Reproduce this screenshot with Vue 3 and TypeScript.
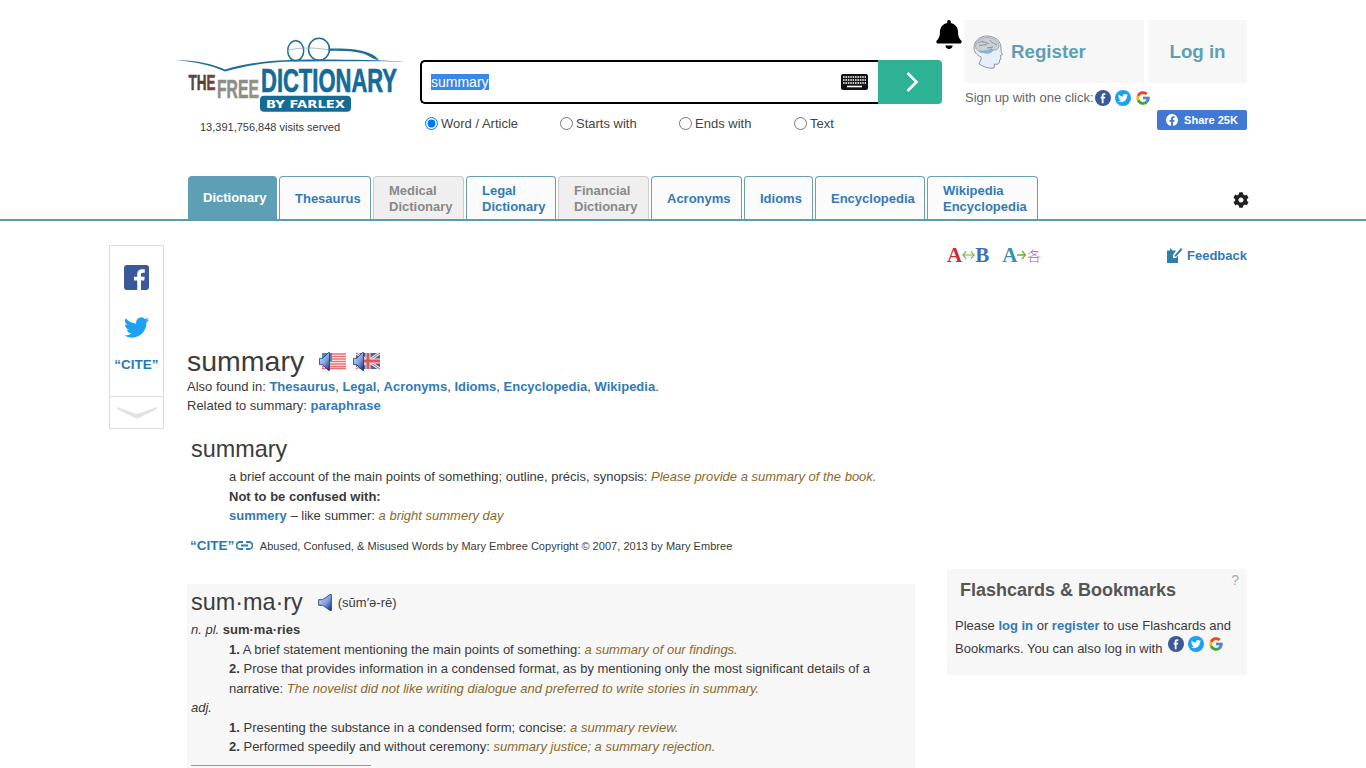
<template>
  <div class="page">
    <!-- shared icons -->
    <svg class="defs" width="0" height="0">
      <defs>
        <linearGradient id="speaker-fill" x1="0" y1="0" x2="1" y2="1">
          <stop offset="0" stop-color="#d5e4f8" />
          <stop offset=".55" stop-color="#7f9fdc" />
          <stop offset="1" stop-color="#12297e" />
        </linearGradient>
        <linearGradient id="the-fill" x1="0" y1="0" x2="1" y2="0">
          <stop offset="0" stop-color="#56504c" />
          <stop offset=".55" stop-color="#5a3a2e" />
          <stop offset="1" stop-color="#7d4b3a" />
        </linearGradient>
        <linearGradient id="free-fill" x1="0" y1="0" x2="1" y2="0">
          <stop offset="0" stop-color="#8e8e88" />
          <stop offset=".7" stop-color="#8e8e88" />
          <stop offset="1" stop-color="#a5976f" />
        </linearGradient>
        <symbol id="i-fb" viewBox="0 0 24 24">
          <circle cx="12" cy="12" r="12" fill="#3b5998" />
          <path d="M15.5 7.5h-1.6c-.8 0-1.1.4-1.1 1.1v1.6h2.600l-.4 2.600h-2.200V20h-2.700v-7.200H8.500v-2.600h1.600V8.300c0-2.200 1.300-3.400 3.300-3.400h2.100z" fill="#fff" />
        </symbol>
        <symbol id="i-tw" viewBox="0 0 24 24">
          <circle cx="12" cy="12" r="12" fill="#1da1f2" />
          <path transform="translate(4.5 4.6) scale(.625)" d="M23.953 4.57a10 10 0 01-2.825.775 4.958 4.958 0 002.163-2.723c-.951.555-2.005.959-3.127 1.184a4.92 4.92 0 00-8.384 4.482C7.69 8.095 4.067 6.13 1.64 3.162a4.822 4.822 0 00-.666 2.475c0 1.71.87 3.213 2.188 4.096a4.904 4.904 0 01-2.228-.616v.06a4.923 4.923 0 003.946 4.827 4.996 4.996 0 01-2.212.085 4.936 4.936 0 004.604 3.417 9.867 9.867 0 01-6.102 2.105c-.39 0-.779-.023-1.17-.067a13.995 13.995 0 007.557 2.209c9.053 0 13.998-7.496 13.998-13.985 0-.21 0-.42-.015-.63A9.935 9.935 0 0024 4.59z" fill="#fff" />
        </symbol>
        <symbol id="i-g" viewBox="0 0 48 48">
          <path d="M43.6 20.5H42V20H24v8h11.3C33.7 32.7 29.2 36 24 36c-6.6 0-12-5.4-12-12s5.4-12 12-12c3.1 0 5.8 1.2 8 3l5.7-5.7C34 6.1 29.3 4 24 4 13 4 4 13 4 24s9 20 20 20 20-9 20-20c0-1.3-.1-2.4-.4-3.5z" fill="#fbbc05" />
          <path d="M6.3 14.7l6.6 4.8C14.7 15.1 19 12 24 12c3.1 0 5.8 1.2 8 3l5.7-5.7C34 6.1 29.3 4 24 4 16.3 4 9.7 8.3 6.3 14.7z" fill="#ea4335" />
          <path d="M24 44c5.2 0 9.9-2 13.4-5.2l-6.2-5.2C29.2 35.1 26.7 36 24 36c-5.2 0-9.6-3.3-11.3-8l-6.5 5C9.5 39.6 16.2 44 24 44z" fill="#34a853" />
          <path d="M43.6 20.5H42V20H24v8h11.3c-.8 2.2-2.2 4.2-4.1 5.6l6.2 5.2C37 39.2 44 34 44 24c0-1.3-.1-2.4-.4-3.5z" fill="#4285f4" />
        </symbol>
        <symbol id="i-speaker" viewBox="0 0 11 18" preserveAspectRatio="none">
          <path d="M.5 6h3.200L9.500.5h1v17h-1L3.700 12H.5z" fill="url(#speaker-fill)" stroke="#14297c" stroke-width=".7" />
        </symbol>
      </defs>
    </svg>

    <header class="top">
      <div class="brand">
        <svg class="logo" width="232" height="78" viewBox="0 0 232 78">
          <path d="M0 24C20 24 38 28 50 33.500C72 27 95 24.500 120 23.800C160 23.200 200 24 230 25.700C200 25 160 25 120 25.500C95 26 72 29 50 35.500C38 30 20 25.500 0 24Z" fill="#1d6f9a" />
          <ellipse cx="120.700" cy="14.700" rx="8" ry="10" fill="none" stroke="#1d6f9a" stroke-width="1.500" />
          <ellipse cx="144" cy="13.300" rx="10.500" ry="11" fill="none" stroke="#1d6f9a" stroke-width="1.500" />
          <path d="M112 14.500C125 11 140 11.500 155 14" fill="none" stroke="#7ea6bd" stroke-width=".7" />
          <path d="M153 12.500C170 12 186 13 194 17C199 19 202 21.500 204 24C198 23.500 195 20 188 17.500C178 15 165 14.500 154 15Z" fill="#1d6f9a" />
          <text class="logo-the" x="13.500" y="54" textLength="27" lengthAdjust="spacingAndGlyphs" fill="url(#the-fill)">THE</text>
          <text class="logo-free" x="42" y="62.300" textLength="42" lengthAdjust="spacingAndGlyphs" fill="url(#free-fill)">FREE</text>
          <text class="logo-dict" x="86" y="55.700" textLength="136" lengthAdjust="spacingAndGlyphs">DICTIONARY</text>
          <rect x="85" y="59.700" width="91" height="16" rx="4" fill="#156b96" />
          <text class="logo-by" x="91" y="71.800" textLength="79" lengthAdjust="spacingAndGlyphs">BY FARLEX</text>
        </svg>
        <p class="visits">13,391,756,848 visits served</p>
      </div>

      <form class="search" @submit.prevent>
        <div class="search-row">
          <div class="search-field">
            <input ref="searchInput" class="search-input" type="text" value="summary" />
            <svg class="keyboard" width="27" height="16" viewBox="0 0 27 16">
              <rect width="27" height="16" rx="2" fill="#111" />
              <path d="M2 3h23M2 6h23M2 9h23" stroke="#fff" stroke-width="1.400" stroke-dasharray="1.600 .8" />
              <path d="M6 12.500h15" stroke="#fff" stroke-width="1.600" />
            </svg>
          </div>
          <button class="search-btn" type="submit" aria-label="Search">
            <svg width="14" height="22" viewBox="0 0 14 22">
              <path d="M2.500 2l9 9-9 9" fill="none" stroke="#fff" stroke-width="2.600" />
            </svg>
          </button>
        </div>
        <div class="modes">
          <label v-for="m in modes" :key="m.label" class="mode" :style="{ width: m.width + 'px' }">
            <input type="radio" name="mode" :checked="m.label === 'Word / Article'" />{{ m.label }}
          </label>
        </div>
      </form>

      <svg class="bell" width="26" height="29" viewBox="0 0 448 512">
        <path d="M224 512c35.32 0 63.97-28.65 63.97-64H160.03c0 35.35 28.65 64 63.97 64zm215.39-149.71c-19.32-20.76-55.47-51.99-55.47-154.29 0-77.7-54.48-139.9-127.94-155.16V32c0-17.67-14.32-32-31.98-32s-31.98 14.33-31.98 32v20.84C118.56 68.1 64.08 130.3 64.08 208c0 102.3-36.15 133.53-55.47 154.29-6 6.45-8.66 14.16-8.61 21.71.11 16.4 12.98 32 32.1 32h383.8c19.12 0 32-15.6 32.1-32 .05-7.55-2.61-15.27-8.61-21.71z" />
      </svg>

      <div class="account">
        <div class="account-btns">
          <a class="acct-btn register">
            <svg width="30" height="34" viewBox="0 0 30 34">
              <path d="M1 13C1 6 7 1 14 1c8 0 14 5 14 12 0 3 0 4 1.500 6.500l-2 1 .5 3.500-1.500 1c.5 3-1 5-5 4l-.5 4c-5 1-11-1.500-15-4 1-3 3-5 2-7C4 20 1 17 1 13z" fill="#e6eefa" stroke="#8d939b" />
              <path d="M2.500 12C2.500 6 8 2.500 14 2.500c6 0 12 3.500 12 9-1 3-3 4-5.500 3.500-3 4-7 3.500-10 2.500-3 0-7-1.500-8-5.500z" fill="#cdd0d3" stroke="#8d939b" stroke-width=".7" />
              <path d="M6 11c3-2 5 0 8-2M9 6c2 2 5 1 7 3M17 5c1 3 4 3 7 5M5 8c2-1 3-2 5-1M14 13c2 0 4-1 6-1" fill="none" stroke="#7c8085" stroke-width=".8" />
              <path d="M6 15c4 1.500 9 .5 12-2l2.500 2c-3 3-6 3.500-10 3-2 0-3.500-1-4.500-3z" fill="#7fb1d8" />
            </svg>
            Register
          </a>
          <a class="acct-btn login">Log in</a>
        </div>
        <div class="signup">
          Sign up with one click:
          <svg class="signup-first" width="16" height="16"><use href="#i-fb" /></svg>
          <svg width="16" height="16"><use href="#i-tw" /></svg>
          <svg width="16" height="16"><use href="#i-g" /></svg>
        </div>
        <a class="share">
          <svg width="12" height="12" viewBox="0 0 24 24">
            <path d="M24 12a12 12 0 10-13.900 11.900v-8.400H7.100V12h3V9.400c0-3 1.800-4.700 4.500-4.700 1.300 0 2.700.2 2.700.2v3h-1.500c-1.500 0-2 .9-2 1.900V12h3.300l-.5 3.500h-2.800v8.400A12 12 0 0024 12z" fill="#fff" />
          </svg>
          Share 25K
        </a>
      </div>
    </header>

    <nav class="tabs">
      <a v-for="t in tabs" :key="t.label" class="tab" :class="t.kind" :style="{ width: t.width + 'px' }">
        <span>{{ t.label }}</span>
      </a>
      <svg class="gear" width="16" height="16" viewBox="0 0 512 512">
        <path d="M487.4 315.700l-42.600-24.600c4.300-23.200 4.300-47 0-70.200l42.600-24.600c4.900-2.800 7.100-8.600 5.500-14-11.100-35.600-30-67.800-54.700-94.600-3.800-4.100-10-5.100-14.800-2.300L380.800 110c-17.900-15.400-38.500-27.300-60.800-35.100V25.800c0-5.600-3.900-10.500-9.400-11.700-36.700-8.200-74.300-7.800-109.200 0-5.500 1.200-9.400 6.100-9.400 11.700V75c-22.200 7.900-42.800 19.800-60.800 35.100L88.700 85.500c-4.900-2.800-11-1.900-14.800 2.300-24.700 26.700-43.600 58.900-54.700 94.600-1.700 5.400.6 11.200 5.500 14L67.300 221c-4.300 23.200-4.300 47 0 70.200l-42.600 24.600c-4.900 2.800-7.100 8.600-5.500 14 11.100 35.600 30 67.800 54.700 94.600 3.800 4.100 10 5.100 14.800 2.300l42.600-24.600c17.900 15.400 38.500 27.300 60.800 35.100v49.200c0 5.600 3.900 10.500 9.400 11.700 36.700 8.200 74.300 7.800 109.200 0 5.500-1.200 9.400-6.100 9.400-11.700v-49.200c22.200-7.900 42.800-19.800 60.800-35.100l42.600 24.600c4.900 2.800 11 1.900 14.800-2.300 24.700-26.700 43.600-58.900 54.700-94.600 1.500-5.500-.7-11.300-5.600-14.100zM256 336c-44.100 0-80-35.900-80-80s35.900-80 80-80 80 35.900 80 80-35.900 80-80 80z" fill="#222" />
      </svg>
    </nav>

    <main class="main">
      <aside class="sharebar">
        <div class="sharebar-top">
          <svg class="bar-fb" width="25" height="25" viewBox="0 0 25 25">
            <rect width="25" height="25" rx="3" fill="#3b5998" />
            <path d="M17 25v-9.500h3.200l.5-3.700H17V9.500c0-1.100.3-1.800 1.800-1.800h2V4.400c-.4 0-1.500-.1-2.800-.1-2.900 0-4.800 1.700-4.800 4.900v2.600H10v3.700h3.200V25z" fill="#fff" />
          </svg>
          <svg class="bar-tw" width="25" height="21" viewBox="0 0 24 20">
            <path transform="translate(0 -2)" d="M23.953 4.570a10 10 0 01-2.825.775 4.958 4.958 0 002.163-2.723c-.951.555-2.005.959-3.127 1.184a4.920 4.920 0 00-8.384 4.482C7.690 8.095 4.067 6.130 1.640 3.162a4.822 4.822 0 00-.666 2.475c0 1.710.870 3.213 2.188 4.096a4.904 4.904 0 01-2.228-.616v.06a4.923 4.923 0 003.946 4.827 4.996 4.996 0 01-2.212.085 4.936 4.936 0 004.604 3.417 9.867 9.867 0 01-6.102 2.105c-.39 0-.779-.023-1.170-.067a13.995 13.995 0 007.557 2.209c9.053 0 13.998-7.496 13.998-13.985 0-.21 0-.42-.015-.63A9.935 9.935 0 0024 4.590z" fill="#1da1f2" />
          </svg>
          <span class="cite bar-cite">“CITE”</span>
        </div>
        <div class="sharebar-more">
          <svg width="40" height="14" viewBox="0 0 40 14">
            <path d="M0 1l20 7 20-7v2L20 13 0 3z" fill="#e3e3e3" />
          </svg>
        </div>
      </aside>

      <section class="content">
        <h1 class="headword">
          summary
          <span class="flag">
            <svg width="28" height="19" viewBox="0 0 28 19">
              <rect x="4" y="1" width="24" height="16" fill="#fff" />
              <path d="M4 2h24M4 4.500h24M4 7h24M4 9.500h24M4 12h24M4 14.500h24M4 16.500h24" stroke="#e86f6c" stroke-width="1.300" />
              <rect x="4" y="1" width="10" height="8.500" fill="#4f86b8" />
              <use href="#i-speaker" x="1" y="0" width="11" height="19" />
            </svg>
          </span>
          <span class="flag">
            <svg width="28" height="19" viewBox="0 0 28 19">
              <rect x="4" y="1" width="24" height="16" fill="#46619c" />
              <path d="M4 1l24 16M28 1L4 17" stroke="#f3e6e6" stroke-width="3" />
              <path d="M4 1l24 16M28 1L4 17" stroke="#d65a5a" stroke-width="1" />
              <path d="M16 1v16M4 9h24" stroke="#f3e6e6" stroke-width="5" />
              <path d="M16 1v16M4 9h24" stroke="#d65a5a" stroke-width="3" />
              <use href="#i-speaker" x="1" y="0" width="11" height="19" />
            </svg>
          </span>
        </h1>
        <p class="found">
          Also found in:
          <template v-for="(f, i) in foundIn" :key="f"><a class="link">{{ f }}</a>{{ i < foundIn.length - 1 ? ', ' : '.' }}</template>
        </p>
        <p class="found">Related to summary: <a class="link">paraphrase</a></p>

        <article class="usage">
          <h2 class="entry-word">summary</h2>
          <div class="def">
            a brief account of the main points of something; outline, précis, synopsis:
            <i class="ex">Please provide a summary of the book.</i>
          </div>
          <div class="def"><b>Not to be confused with:</b></div>
          <div class="def"><a class="link">summery</a> – like summer: <i class="ex">a bright summery day</i></div>
          <div class="source">
            <span class="cite">“CITE”</span>
            <svg width="17" height="9" viewBox="0 0 17 9">
              <path d="M7 1H4a3.500 3.500 0 000 7h3M10 1h3a3.500 3.500 0 010 7h-3M5 4.500h7" fill="none" stroke="#2f7fb8" stroke-width="1.800" />
            </svg>
            <span class="source-text">Abused, Confused, &amp; Misused Words by Mary Embree Copyright © 2007, 2013 by Mary Embree</span>
          </div>
        </article>

        <article class="entry">
          <div class="entry-head">
            <span class="entry-syl">sum·ma·ry</span>
            <svg class="entry-sound" width="14" height="17"><use href="#i-speaker" width="14" height="17" /></svg>
            <span class="pron">(sŭm′ə-rē)</span>
          </div>
          <div class="line"><i>n. pl.</i> <b>sum·ma·ries</b></div>
          <div class="def"><b>1.</b> A brief statement mentioning the main points of something: <i class="ex">a summary of our findings.</i></div>
          <div class="def">
            <b>2.</b> Prose that provides information in a condensed format, as by mentioning only the most significant details of a narrative:
            <i class="ex">The novelist did not like writing dialogue and preferred to write stories in summary.</i>
          </div>
          <div class="line"><i>adj.</i></div>
          <div class="def"><b>1.</b> Presenting the substance in a condensed form; concise: <i class="ex">a summary review.</i></div>
          <div class="def"><b>2.</b> Performed speedily and without ceremony: <i class="ex">summary justice; a summary rejection.</i></div>
          <hr class="rule" />
        </article>
      </section>

      <aside class="side">
        <div class="tools">
          <span class="tr tr-ab">
            <b class="a-red">A</b>
            <svg class="tr-arrow" width="13" height="10" viewBox="0 0 14 10">
              <path d="M4.500 1L1 5l3.500 4M9.500 1L13 5 9.500 9M1 5h12" fill="none" stroke="#6cb33f" stroke-width="1.200" />
            </svg>
            <b class="b-blue">B</b>
          </span>
          <span class="tr tr-lang">
            <b class="a-teal">A</b>
            <svg class="tr-arrow" width="9" height="10" viewBox="0 0 9 10">
              <path d="M5 1l3.500 4L5 9M0 5h8" fill="none" stroke="#6cb33f" stroke-width="1.300" />
            </svg>
            <span class="kanji">各</span>
          </span>
          <a class="feedback">
            <svg width="16" height="16" viewBox="0 0 16 16">
              <path d="M0 3.500h3V1l2.500 2.500H9L6 8v3h3l2-2.500V16H0z" fill="#2e7fa8" />
              <path d="M7.500 8.500L14 1l1.500 1.300L9.200 9.500H7.500z" fill="#2e7fa8" />
            </svg>
            Feedback
          </a>
        </div>
        <div class="flash">
          <span class="flash-help">?</span>
          <h3 class="flash-title">Flashcards &amp; Bookmarks</h3>
          <p class="flash-text">
            Please <a class="link">log in</a> or <a class="link">register</a> to use Flashcards and Bookmarks. You can also log in with
            <svg class="flash-fb" width="16" height="16"><use href="#i-fb" /></svg>
            <svg class="flash-tw" width="16" height="16"><use href="#i-tw" /></svg>
            <svg class="flash-g" width="16" height="16"><use href="#i-g" /></svg>
          </p>
        </div>
      </aside>
    </main>
  </div>
</template>

<script setup lang="ts">
import { onMounted, ref } from "vue"

interface Tab {
  label: string
  width: number
  kind: string
}

const searchInput = ref<HTMLInputElement | null>(null)

const modes = [
  { label: "Word / Article", width: 135 },
  { label: "Starts with", width: 119 },
  { label: "Ends with", width: 115 },
  { label: "Text", width: 60 },
]

const tabs: Tab[] = [
  { label: "Dictionary", width: 89, kind: "active" },
  { label: "Thesaurus", width: 92, kind: "" },
  { label: "Medical Dictionary", width: 91, kind: "muted" },
  { label: "Legal Dictionary", width: 90, kind: "" },
  { label: "Financial Dictionary", width: 91, kind: "muted" },
  { label: "Acronyms", width: 91, kind: "" },
  { label: "Idioms", width: 69, kind: "" },
  { label: "Encyclopedia", width: 110, kind: "" },
  { label: "Wikipedia Encyclopedia", width: 111, kind: "" },
]

const foundIn = ["Thesaurus", "Legal", "Acronyms", "Idioms", "Encyclopedia", "Wikipedia"]

onMounted(() => {
  searchInput.value?.focus()
  searchInput.value?.select()
})
</script>

<style>
html,
body {
  margin: 0;
  background: #fff;
}
</style>

<style scoped>
.page {
  height: 768px;
  overflow: hidden;
  font-family: "Liberation Sans", Arial, sans-serif;
  font-size: 13px;
  color: #3a3a3a;
  box-sizing: border-box;
}

.defs {
  position: absolute;
}

a {
  cursor: pointer;
}

p {
  margin: 0;
}

.link {
  color: #337ab7;
  font-weight: bold;
}

.ex {
  color: #8a6a2a;
}

.cite {
  color: #1f7ab8;
  font-weight: bold;
  font-size: 13.5px;
}

/* top */
.top {
  display: flex;
  height: 176px;
  padding-left: 175px;
}

.brand {
  width: 245px;
  padding-top: 36px;
  box-sizing: border-box;
  flex: none;
}

.logo {
  display: block;
}

.logo text {
  font-family: "Liberation Sans", Arial, sans-serif;
  font-weight: bold;
}

.logo-the {
  font-size: 22px;
  stroke: #5a3a2e;
  stroke-width: 0.5px;
}

.logo-free {
  font-size: 25.5px;
  stroke: #8e8e88;
  stroke-width: 0.6px;
}

.logo-dict {
  font-size: 33px;
  fill: #156b96;
  stroke: #156b96;
  stroke-width: 0.7px;
}

.logo .logo-by {
  font-family: "DejaVu Sans", sans-serif;
  font-size: 10.5px;
  fill: #fff;
}

.visits {
  font-size: 11px;
  margin: 7px 0 0 25px;
}

.search {
  width: 522px;
  padding-top: 60px;
  box-sizing: border-box;
  flex: none;
}

.search-row {
  display: flex;
  height: 44px;
}

.search-field {
  flex: 1;
  position: relative;
  display: flex;
}

.search-input {
  flex: 1;
  min-width: 0;
  border: 2px solid #000;
  border-right: 0;
  border-radius: 5px 0 0 5px;
  outline: 0;
  padding: 0 50px 0 9px;
  font: 14px "Liberation Sans", Arial, sans-serif;
  color: #000;
}

.search-input::selection {
  background: #3a87e6;
  color: #fff;
}

.keyboard {
  position: absolute;
  right: 10px;
  top: 14px;
}

.search-btn {
  width: 64px;
  border: 0;
  padding: 0 0 0 3px;
  background: #2db295;
  border-radius: 0 4px 4px 0;
  display: flex;
  align-items: center;
  justify-content: center;
}

.modes {
  display: flex;
  padding: 12px 0 0 5px;
}

.mode {
  display: flex;
  align-items: center;
  font-size: 13px;
  color: #444;
  flex: none;
}

.mode input {
  margin: 0 3px 0 0;
  width: 13px;
  height: 13px;
}

.bell {
  margin: 20px 0 0 -6px;
  flex: none;
}

.account {
  width: 283px;
  margin: 20px 0 0 2px;
  flex: none;
}

.account-btns {
  display: flex;
  gap: 4px;
}

.acct-btn {
  height: 63px;
  background: #f7f7f7;
  color: #5f9fb5;
  font-size: 18.72px;
  font-weight: bold;
  display: flex;
  align-items: center;
}

.register {
  width: 180px;
  gap: 8px;
  padding-left: 9px;
  box-sizing: border-box;
}

.login {
  width: 99px;
  justify-content: center;
}

.signup {
  display: flex;
  align-items: center;
  gap: 4px;
  margin-top: 6px;
  padding-left: 1px;
  height: 17px;
  color: #666;
  font-size: 13px;
  white-space: nowrap;
}

.signup-first {
  margin-left: -3px;
}

.share {
  display: flex;
  align-items: center;
  justify-content: center;
  gap: 6px;
  width: 90px;
  height: 20px;
  margin: 4px 0 0 193px;
  background: #4078d4;
  border-radius: 2px;
  color: #fff;
  font-size: 11px;
  font-weight: bold;
}

/* tabs */
.tabs {
  display: flex;
  align-items: flex-end;
  gap: 2px;
  height: 45px;
  padding-left: 188px;
  border-bottom: 2px solid #5f9bb0;
  box-sizing: border-box;
  position: relative;
}

.tab {
  height: 43px;
  box-sizing: border-box;
  flex: none;
  display: flex;
  align-items: center;
  padding: 2px 0 0 15px;
  border: 1px solid #6a9fb3;
  border-bottom: 0;
  border-radius: 4px 4px 0 0;
  background: #fbfbfb;
  color: #337ab7;
  font-size: 13px;
  line-height: 16px;
  font-weight: bold;
}

.tab.active {
  background: #5f9fb5;
  color: #fff;
  border-color: #5f9fb5;
  padding: 0 0 0 14px;
}

.tab.muted {
  background: #efefef;
  color: #888;
  border-color: #ccc;
}

.gear {
  position: absolute;
  left: 1233px;
  top: 16px;
}

/* main */
.main {
  display: flex;
}

.sharebar {
  width: 55px;
  height: 184px;
  margin: 24px 0 0 109px;
  border: 1px solid #ddd;
  box-sizing: border-box;
  flex: none;
  display: flex;
  flex-direction: column;
}

.sharebar-top {
  height: 150px;
  display: flex;
  flex-direction: column;
  align-items: center;
  padding-top: 19px;
  box-sizing: border-box;
}

.bar-tw {
  margin-top: 27px;
}

.bar-cite {
  margin-top: 19px;
  line-height: 16px;
}

.sharebar-more {
  flex: 1;
  border-top: 1px solid #ddd;
  display: flex;
  align-items: center;
  justify-content: center;
}

.content {
  width: 728px;
  margin-left: 23px;
  padding-top: 124px;
  flex: none;
}

.headword {
  margin: 0;
  font-size: 28.5px;
  font-weight: normal;
  line-height: 32px;
  color: #3c3c3c;
  display: flex;
  align-items: center;
}

.flag {
  margin-left: 6px;
  display: flex;
}

.flag:first-of-type {
  margin-left: 14px;
}

.found {
  line-height: 19px;
}

.usage {
  padding: 0 4px;
  margin-top: 17px;
}

.entry-word {
  margin: 0;
  font-size: 23.4px;
  font-weight: normal;
  line-height: 35px;
  color: #3c3c3c;
}

.def {
  margin-left: 38px;
  line-height: 19.5px;
}

.source {
  display: flex;
  align-items: center;
  height: 16px;
  margin: 12px 0 0 -1px;
}

.source svg {
  margin-left: 2px;
}

.source-text {
  font-size: 11px;
  margin-left: 6.5px;
  letter-spacing: 0.035px;
}

.entry {
  background: #f7f7f7;
  padding: 3px 4px 2px;
  margin-top: 30.5px;
}

.entry-head {
  display: flex;
  align-items: center;
  height: 30px;
  margin-bottom: 3px;
}

.entry-syl {
  font-size: 23.4px;
  color: #3c3c3c;
}

.entry-sound {
  margin-left: 15px;
}

.pron {
  margin-left: 6px;
}

.line {
  line-height: 19.5px;
}

.rule {
  width: 180px;
  margin: 8px 0 0;
  border: 0;
  border-top: 1px solid #999;
}

.side {
  width: 300px;
  margin-left: 32px;
  flex: none;
}

.tools {
  display: flex;
  align-items: center;
  height: 20px;
  margin-top: 24px;
}

.tr {
  display: flex;
  align-items: center;
  font-family: "Liberation Serif", serif;
  font-size: 21px;
  line-height: 20px;
}

.tr-lang {
  margin-left: 13px;
}

.tr-arrow {
  flex: none;
}

.a-red {
  color: #c8303a;
}

.b-blue {
  color: #3d6fb5;
}

.a-teal {
  color: #3592b0;
}

.kanji {
  color: #a5609e;
  font-size: 14px;
  margin-left: 1px;
  font-family: "Noto Sans CJK JP", sans-serif;
  font-weight: 300;
}

.feedback {
  margin-left: auto;
  display: flex;
  align-items: center;
  gap: 4px;
  color: #337ab7;
  font-weight: bold;
  font-size: 13px;
}

.flash {
  background: #f7f7f7;
  height: 106px;
  margin-top: 304px;
  padding: 11px 8px 0;
  box-sizing: border-box;
  position: relative;
}

.flash-help {
  position: absolute;
  top: 3px;
  right: 8px;
  color: #aaa;
  font-size: 14px;
}

.flash-title {
  margin: 0 0 0 5px;
  font-size: 18px;
  line-height: 20px;
  color: #555;
}

.flash-text {
  margin-top: 13.5px;
  line-height: 23px;
}

.flash-text svg {
  vertical-align: 0;
  transform: translateY(-1px);
}

.flash-fb {
  margin-left: 2px;
}

.flash-tw {
  margin-left: 4px;
}

.flash-g {
  margin-left: 4px;
}
</style>
